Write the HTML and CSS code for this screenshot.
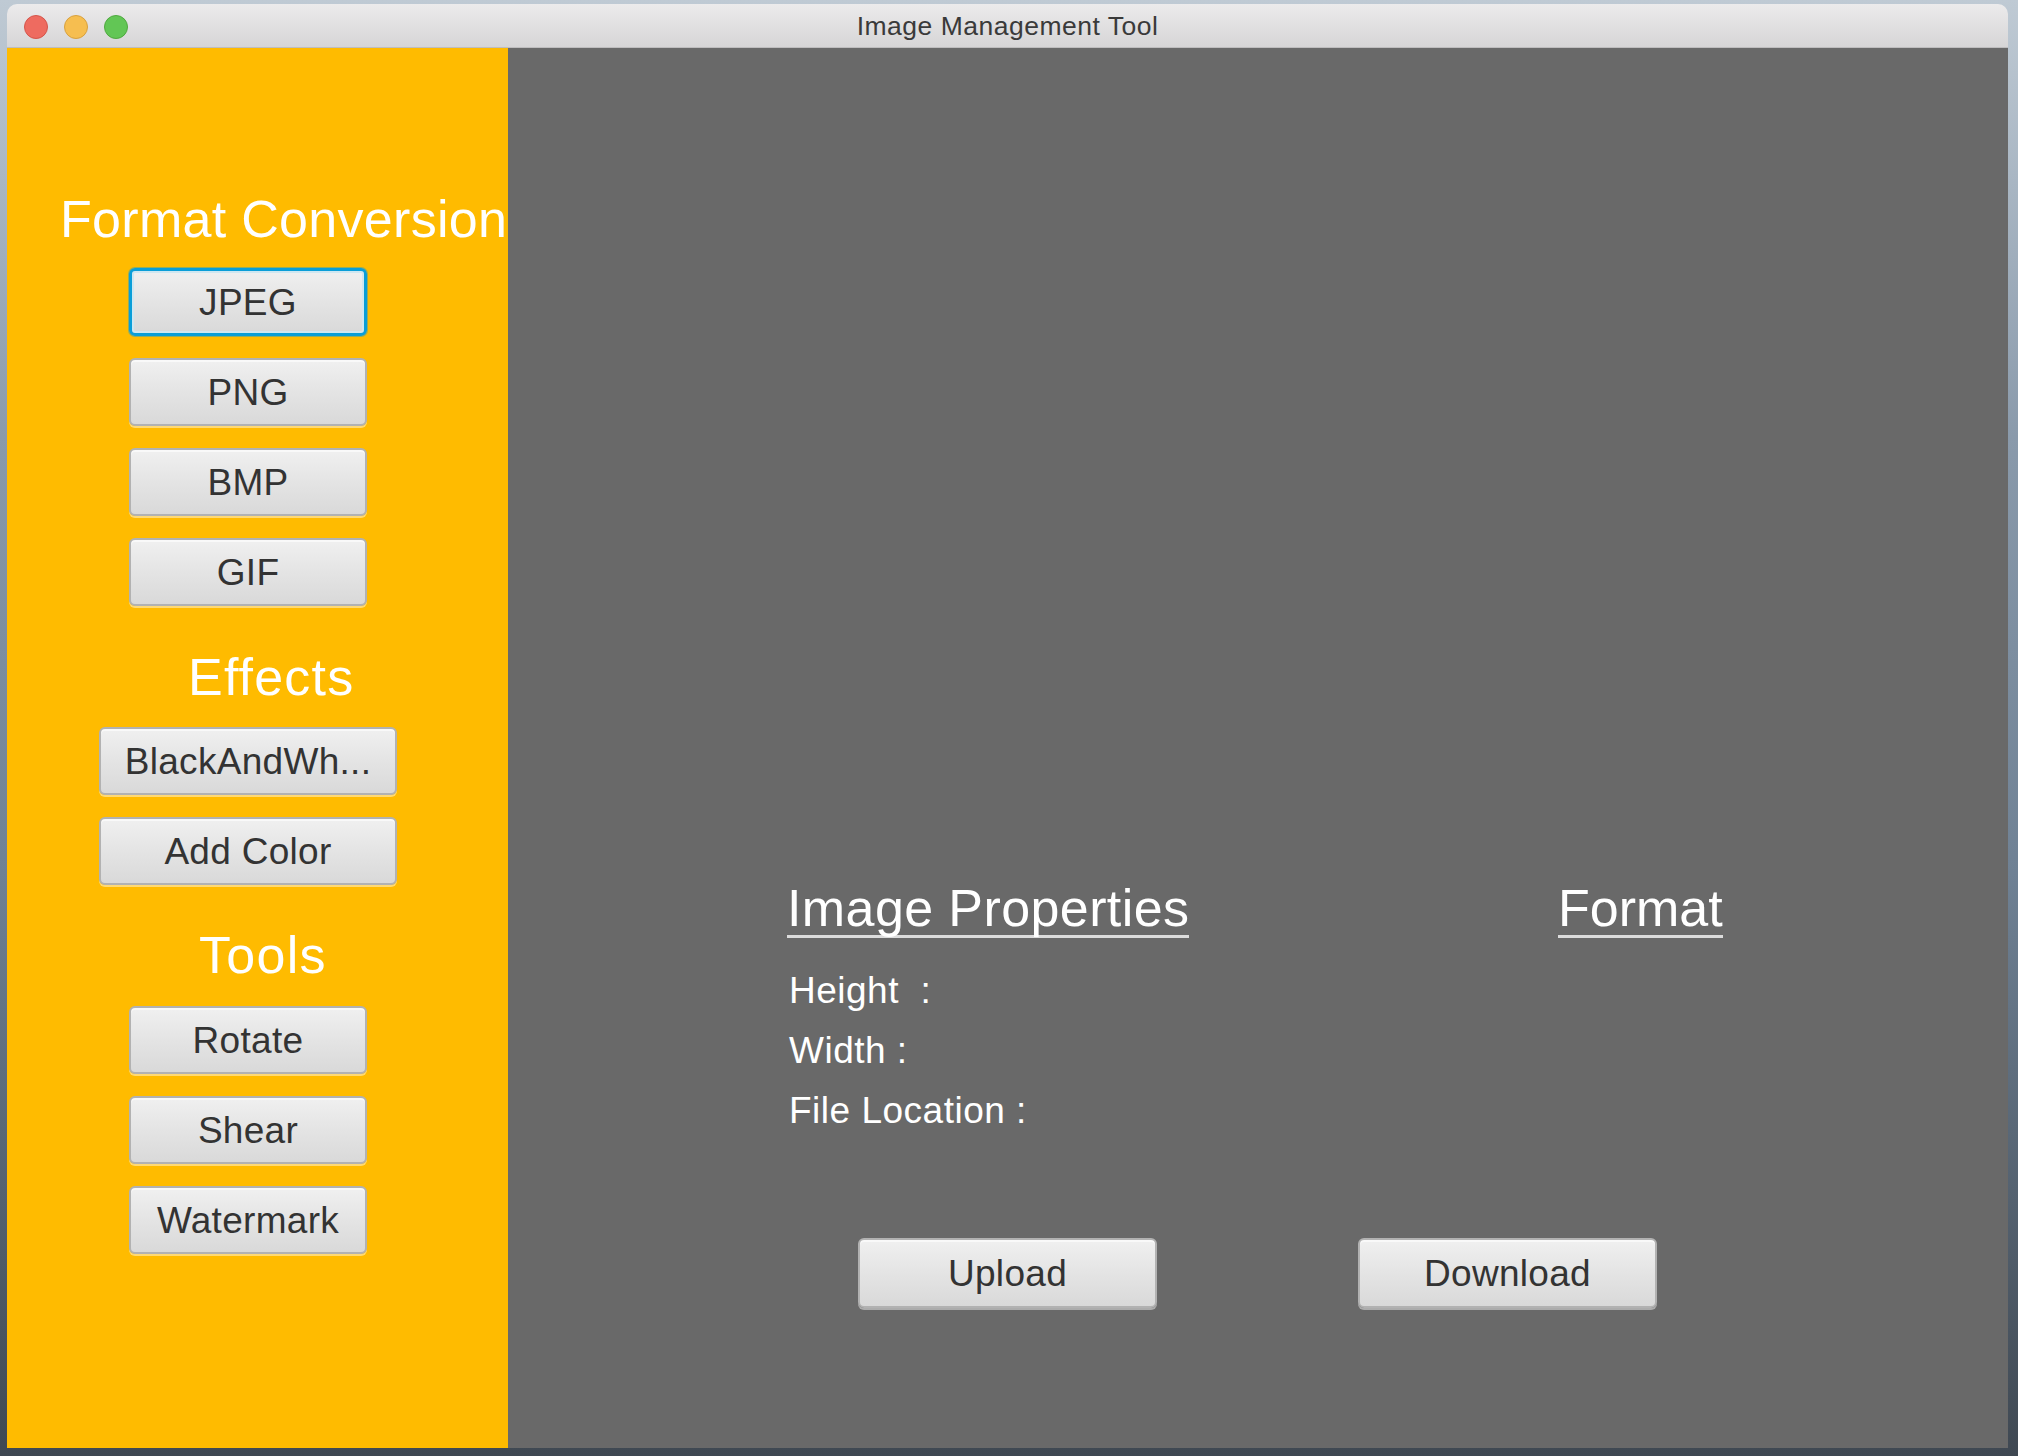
FILE: index.html
```html
<!DOCTYPE html>
<html lang="en">
<head>
<meta charset="utf-8">
<title>Image Management Tool</title>
<link rel="stylesheet" href="styles.css">
</head>
<body>
<div class="window">
  <div class="titlebar">
    <div class="lights">
      <span class="light red"></span>
      <span class="light yellow"></span>
      <span class="light green"></span>
    </div>
    <div class="title">Image Management Tool</div>
    <div class="spacer"></div>
  </div>
  <div class="content">
    <aside class="sidebar">
      <h2 class="sb-head head-format">Format Conversion</h2>
      <div class="btn-group group-format">
        <button class="btn btn-focus">JPEG</button>
        <button class="btn">PNG</button>
        <button class="btn">BMP</button>
        <button class="btn">GIF</button>
      </div>
      <h2 class="sb-head head-effects">Effects</h2>
      <div class="btn-group group-effects">
        <button class="btn">BlackAndWh...</button>
        <button class="btn">Add Color</button>
      </div>
      <h2 class="sb-head head-tools">Tools</h2>
      <div class="btn-group group-tools">
        <button class="btn">Rotate</button>
        <button class="btn">Shear</button>
        <button class="btn">Watermark</button>
      </div>
    </aside>
    <main class="main">
      <div class="props">
        <div class="col col-props">
          <h2 class="u-head u-props">Image Properties</h2>
          <div class="rows">
            <div class="row">Height&nbsp; :</div>
            <div class="row">Width :</div>
            <div class="row">File Location :</div>
          </div>
        </div>
        <div class="col col-format">
          <h2 class="u-head">Format</h2>
        </div>
      </div>
      <div class="actions">
        <button class="btn btn-wide">Upload</button>
        <button class="btn btn-wide">Download</button>
      </div>
    </main>
  </div>
</div>
</body>
</html>
```

FILE: styles.css
```css
html, body {
  margin: 0;
  padding: 0;
}

body {
  width: 2018px;
  height: 1456px;
  overflow: hidden;
  background: linear-gradient(180deg, #bfcad4 0%, #8a9aab 30%, #6f8194 60%, #3f4852 100%);
  font-family: "Liberation Sans", Arial, sans-serif;
}

.window {
  margin: 4px 0 0 7px;
  width: 2001px;
  height: 1444px;
  display: flex;
  flex-direction: column;
  border-radius: 10px 10px 0 0;
  overflow: hidden;
}

.titlebar {
  border-bottom: 1px solid #bebdbe;
  background: linear-gradient(180deg, #ecebec 0%, #d6d5d6 100%);
  display: grid;
  grid-template-columns: 1fr auto 1fr;
  align-items: center;
  padding-top: 2px;
  box-sizing: content-box;
  height: 41px;
}

.lights {
  display: flex;
  gap: 16px;
  padding-left: 17px;
  align-items: center;
}

.light {
  width: 22px;
  height: 22px;
  border-radius: 50%;
  border: 1px solid transparent;
}

.light.red {
  background: #ee6b60;
  border-color: #d5554b;
}

.light.yellow {
  background: #f6be50;
  border-color: #d8a13f;
}

.light.green {
  background: #62c655;
  border-color: #4fa93f;
}

.title {
  font-size: 26.5px;
  letter-spacing: 0.5px;
  line-height: 41px;
  color: #3a3a3a;
  white-space: nowrap;
}

.content {
  display: flex;
  height: 1400px;
}

.sidebar {
  width: 501px;
  flex: none;
  background: #ffbb00;
  display: flex;
  flex-direction: column;
  align-items: flex-start;
  overflow: hidden;
}

.sb-head {
  margin: 0;
  font-weight: normal;
  font-size: 52px;
  line-height: 60px;
  color: #ffffff;
  white-space: nowrap;
}

.head-format {
  margin: 141px 0 0 53px;
  letter-spacing: 0.3px;
}

.head-effects {
  margin: 41px 0 0 181px;
  letter-spacing: 1.2px;
}

.head-tools {
  margin: 40px 0 0 192px;
  letter-spacing: 1.3px;
}

.btn-group {
  display: flex;
  flex-direction: column;
  gap: 22px;
  margin-top: 19px;
}

.group-format {
  margin-left: 122px;
  width: 238px;
}

.group-effects {
  margin-top: 20px;
  margin-left: 92px;
  width: 298px;
}

.group-tools {
  margin-top: 21px;
  margin-left: 122px;
  width: 238px;
}

.btn {
  display: block;
  box-sizing: border-box;
  height: 68px;
  width: 100%;
  padding: 2px 0 0;
  margin: 0;
  border: 2px solid #b2b2b2;
  border-radius: 6px;
  background: linear-gradient(180deg, #f0f0f0 0%, #e4e4e4 50%, #d9d9d9 100%);
  box-shadow: inset 0 2px 0 rgba(255, 255, 255, 0.6), 0 2px 0 rgba(255, 255, 255, 0.45);
  font-family: "Liberation Sans", Arial, sans-serif;
  font-size: 37px;
  letter-spacing: 0.3px;
  line-height: 62px;
  color: #333333;
  text-align: center;
  white-space: nowrap;
}

.btn-focus {
  border: 3px solid #0a9ed8;
  box-shadow: inset 0 0 0 2px #cfe7f1, 0 0 0 1px rgba(10, 158, 216, 0.45);
  line-height: 60px;
}

.main {
  flex: 1;
  background: #696969;
  padding-top: 833px;
  display: flex;
  flex-direction: column;
  color: #ffffff;
}

.props {
  display: flex;
  padding-left: 279px;
}

.col-props {
  width: 771px;
}

.u-head {
  display: inline-block;
  margin: 0;
  font-weight: normal;
  font-size: 52px;
  line-height: 54px;
  color: #ffffff;
  border-bottom: 3px solid #dcdcdc;
  white-space: nowrap;
}

.u-props {
  letter-spacing: 0.4px;
}

.rows {
  margin-top: 23px;
  padding-left: 2px;
}

.row {
  font-size: 37px;
  letter-spacing: 0.5px;
  line-height: 60px;
  white-space: nowrap;
}

.actions {
  display: flex;
  gap: 201px;
  margin-top: 97px;
  padding-left: 350px;
}

.btn-wide {
  width: 299px;
  height: 70px;
  line-height: 64px;
}
```
